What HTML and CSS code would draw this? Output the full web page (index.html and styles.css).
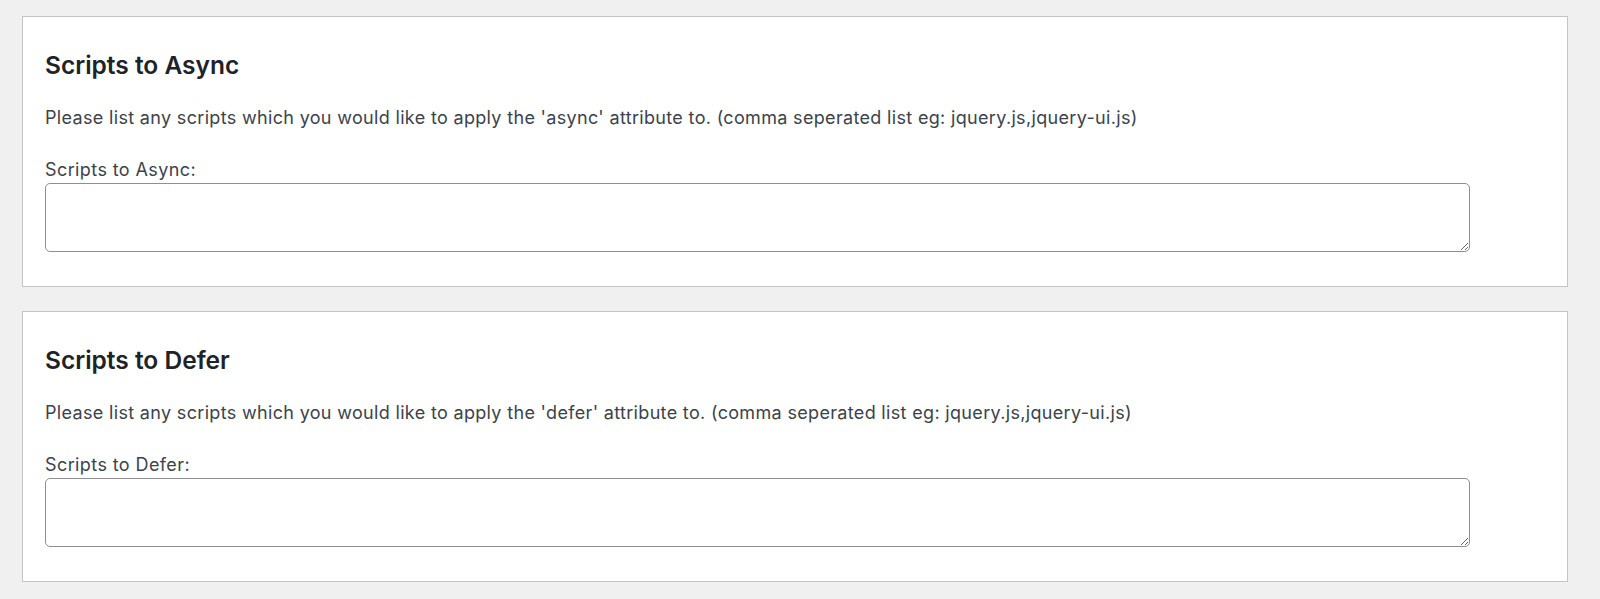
FILE: index.html
```html
<!DOCTYPE html>
<html lang="en">
<head>
<meta charset="utf-8">
<title>Scripts settings</title>
<link rel="stylesheet" href="styles.css">
</head>
<body>
<main class="page">
  <section class="card">
    <h2 class="card-title">Scripts to Async</h2>
    <p class="card-desc">Please list any scripts which you would like to apply the 'async' attribute to. (comma seperated list eg: jquery.js,jquery-ui.js)</p>
    <label class="field-label" for="async">Scripts to Async:</label>
    <textarea class="field" id="async"></textarea>
  </section>
  <section class="card">
    <h2 class="card-title">Scripts to Defer</h2>
    <p class="card-desc">Please list any scripts which you would like to apply the 'defer' attribute to. (comma seperated list eg: jquery.js,jquery-ui.js)</p>
    <label class="field-label" for="defer">Scripts to Defer:</label>
    <textarea class="field" id="defer"></textarea>
  </section>
</main>
</body>
</html>
```
FILE: styles.css
```css
html, body {
  margin: 0;
  padding: 0;
  background: #f0f0f1;
}
body {
  font-family: Inter, "Noto Sans", sans-serif;
  color: #3c434a;
}
.page {
  padding: 16px 32px 0 22px;
  display: flex;
  flex-direction: column;
  gap: 24px;
}
.card {
  background: #fff;
  border: 1px solid #c3c4c7;
  padding: 33px 22px 34px;
  display: flex;
  flex-direction: column;
  box-sizing: border-box;
  height: 271px;
}
.card-title {
  margin: 0;
  font-size: 24.5px;
  line-height: 30px;
  font-weight: 600;
  color: #1d2327;
}
.card-desc {
  margin: 26px 0 0;
  font-size: 18px;
  letter-spacing: 0.33px;
  line-height: 24px;
}
.field-label {
  margin-top: 28px;
  font-size: 18px;
  letter-spacing: 0.4px;
  line-height: 24px;
}
.field {
  margin-top: 1px;
  width: 1425px;
  height: 69px;
  box-sizing: border-box;
  border: 1px solid #8c8f94;
  border-radius: 5px;
  background: #fff;
  font-family: inherit;
  font-size: 17px;
  padding: 4px 8px;
}
```
